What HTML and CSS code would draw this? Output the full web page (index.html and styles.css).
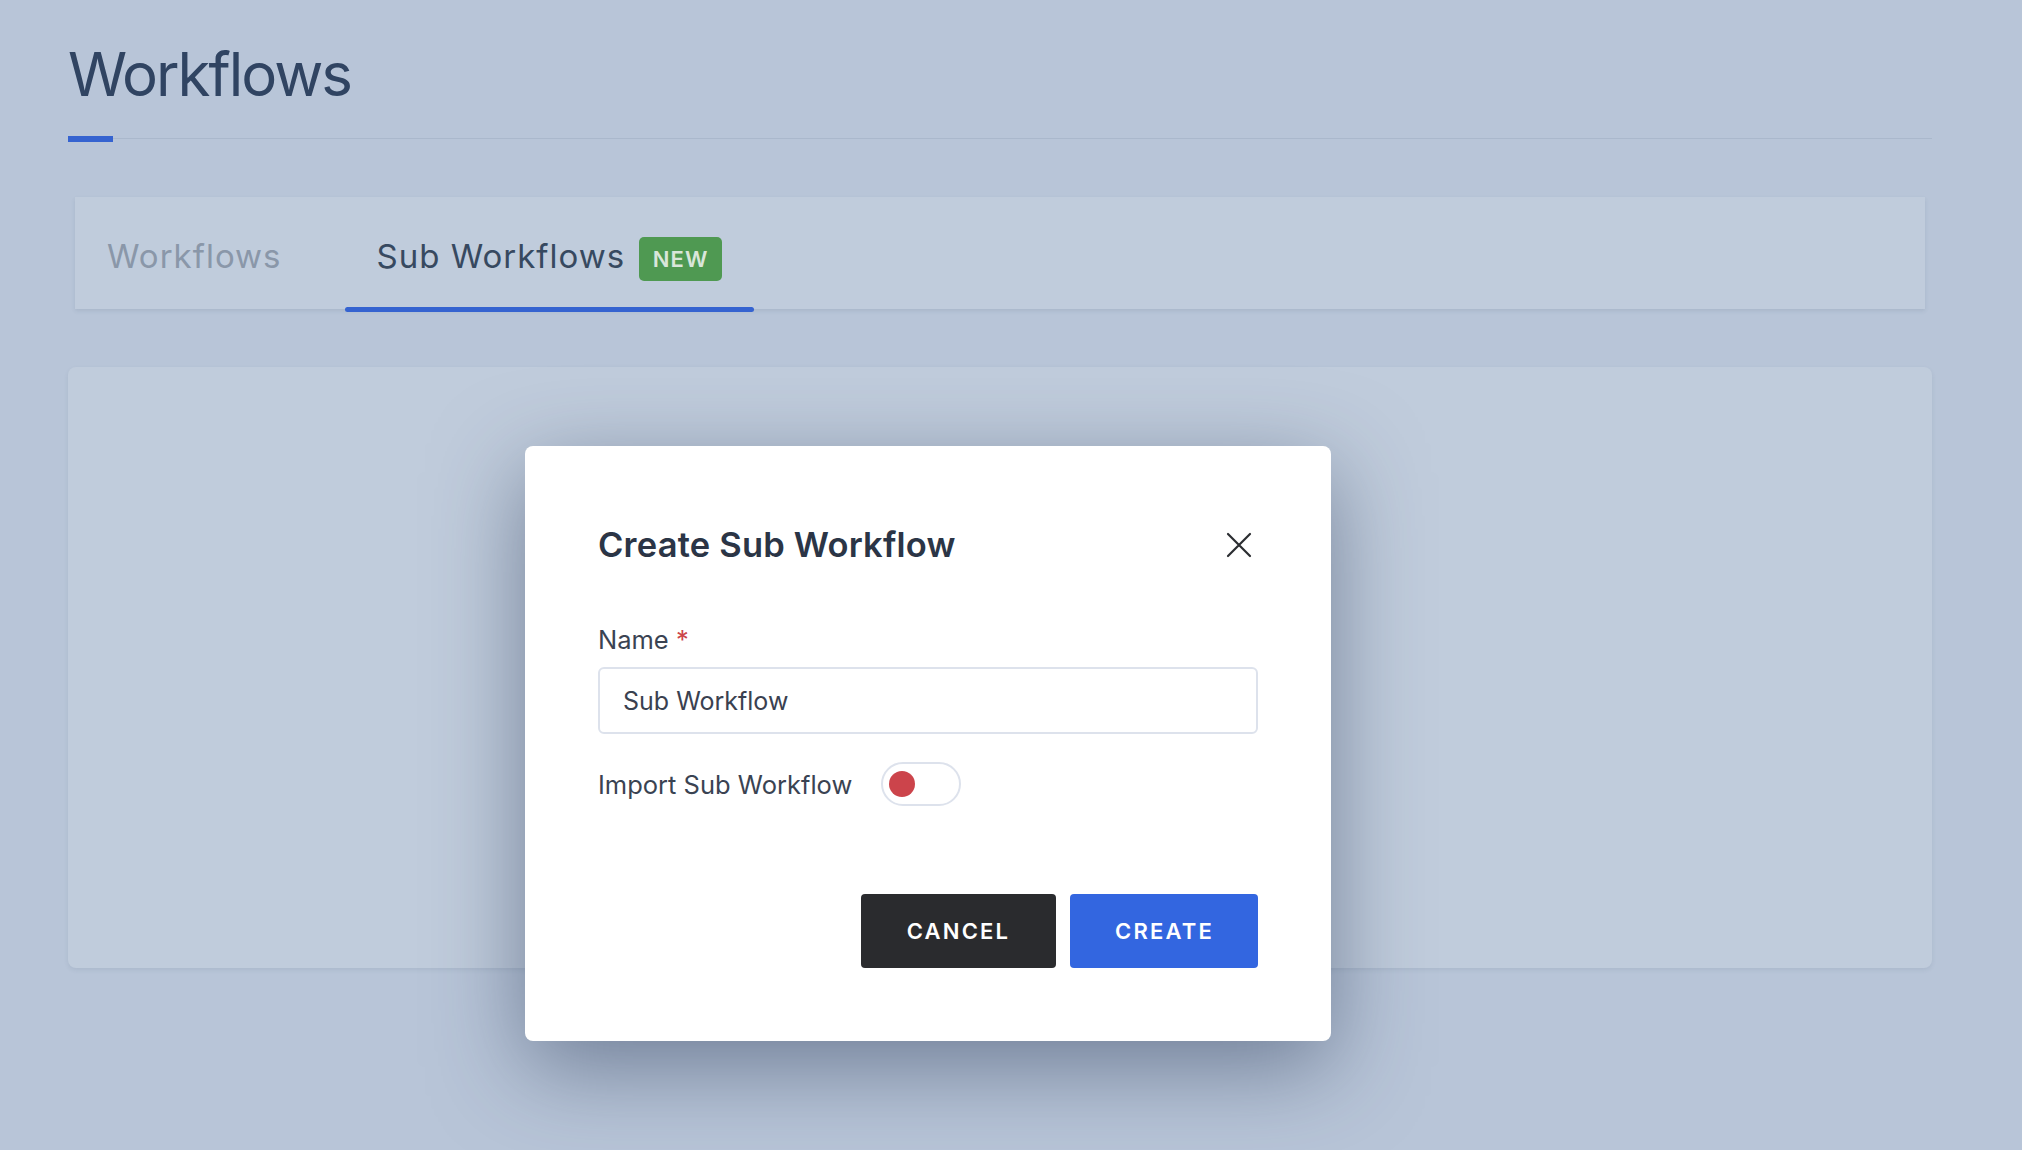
FILE: index.html
```html
<!DOCTYPE html>
<html lang="en">
<head>
<meta charset="utf-8">
<title>Workflows</title>
<link rel="stylesheet" href="styles.css">
</head>
<body>
<div class="page">
  <h1 class="page-title">Workflows</h1>
  <div class="title-rule"><span class="rule-accent"></span><span class="rule-line"></span></div>

  <div class="tabbar">
    <div class="tab">Workflows</div>
    <div class="tab tab-active">Sub Workflows <span class="badge">NEW</span></div>
  </div>

  <div class="card"></div>
</div>

<div class="modal">
  <div class="modal-head">
    <h2 class="modal-title">Create Sub Workflow</h2>
    <button class="close-btn" aria-label="Close">
      <svg width="26" height="26" viewBox="0 0 26 26"><path d="M2 2 L24 24 M24 2 L2 24" stroke="#2b2d31" stroke-width="2.2" fill="none" stroke-linecap="round"/></svg>
    </button>
  </div>
  <label class="field-label">Name <span class="req">*</span></label>
  <div class="input">Sub Workflow</div>
  <div class="toggle-row">
    <span class="toggle-label">Import Sub Workflow</span>
    <span class="toggle"><span class="knob"></span></span>
  </div>
  <div class="actions">
    <button class="btn btn-cancel">CANCEL</button>
    <button class="btn btn-create">CREATE</button>
  </div>
</div>
</body>
</html>
```

FILE: styles.css
```css
* { box-sizing: border-box; }
html, body { margin: 0; padding: 0; }
body {
  width: 2022px;
  height: 1150px;
  overflow: hidden;
  background: #b8c5d8;
  font-family: Inter, "Noto Sans", sans-serif;
  position: relative;
}
.page {
  padding: 38px 90px 0 68px;
}
.page-title {
  margin: 0;
  font-size: 60px;
  line-height: 72px;
  font-weight: 400;
  color: #304462;
  letter-spacing: -2px;
}
.title-rule {
  margin-top: 26px;
  display: flex;
  align-items: flex-start;
  height: 7px;
}
.rule-accent {
  width: 45px;
  height: 6px;
  background: #3563d0;
}
.rule-line {
  flex: 1;
  height: 1px;
  margin-top: 2px;
  background: #aab8cc;
}
.tabbar {
  margin: 54px 7px 0 7px;
  height: 112px;
  background: #c0ccdc;
  display: flex;
  align-items: stretch;
  box-shadow: 0 2px 4px rgba(60, 80, 110, 0.12);
}
.tab {
  display: flex;
  align-items: center;
  padding: 6px 32px 0 32px;
  font-size: 33px;
  letter-spacing: 1px;
  color: #8a97a9;
  position: relative;
  margin-right: 31px;
}
.tab-active {
  color: #374960;
}
.tab-active::after {
  content: "";
  position: absolute;
  left: 0;
  right: 0;
  bottom: -3px;
  height: 5px;
  border-radius: 3px;
  background: #3563d0;
}
.badge {
  display: inline-flex;
  align-items: center;
  justify-content: center;
  margin-left: 14px;
  width: 83px;
  height: 44px;
  border-radius: 5px;
  background: #4f9952;
  color: #d9e6da;
  font-size: 22px;
  font-weight: 600;
  letter-spacing: 1.2px;
  margin-top: 6px;
}
.card {
  margin-top: 58px;
  height: 601px;
  background: #c0ccdc;
  border-radius: 8px;
  box-shadow: 0 2px 4px rgba(60, 80, 110, 0.1);
}
.modal {
  position: absolute;
  left: 525px;
  top: 446px;
  width: 806px;
  height: 595px;
  background: #ffffff;
  border-radius: 8px;
  padding: 79px 73px 0 73px;
  box-shadow: 0 26px 90px rgba(40, 55, 85, 0.5);
}
.modal-head {
  display: flex;
  align-items: center;
  justify-content: space-between;
  height: 40px;
}
.modal-title {
  margin: 0;
  font-size: 34.5px;
  line-height: 40px;
  font-weight: 600;
  color: #2b3546;
  letter-spacing: 0.2px;
}
.close-btn {
  width: 38px;
  height: 38px;
  padding: 0;
  border: 0;
  background: none;
  display: flex;
  align-items: center;
  justify-content: center;
  margin-right: 0;
}
.field-label {
  display: block;
  margin-top: 60px;
  font-size: 25.5px;
  line-height: 30px;
  color: #3a4352;
}
.req { color: #cc4649; }
.input {
  margin-top: 12px;
  height: 67px;
  border: 2px solid #dde2ec;
  border-radius: 6px;
  padding: 0 23px;
  display: flex;
  align-items: center;
  font-size: 25px;
  color: #3a4150;
}
.toggle-row {
  margin-top: 28px;
  display: flex;
  align-items: center;
  height: 44px;
}
.toggle-label {
  font-size: 25.5px;
  color: #3a4352;
}
.toggle {
  margin-left: 29px;
  width: 80px;
  height: 44px;
  border: 2px solid #dde2ec;
  border-radius: 22px;
  display: flex;
  align-items: center;
  padding-left: 6px;
}
.knob {
  width: 26px;
  height: 26px;
  border-radius: 50%;
  background: #cc444b;
}
.actions {
  margin-top: 88px;
  display: flex;
  justify-content: flex-end;
  gap: 14px;
}
.btn {
  height: 74px;
  border: 0;
  border-radius: 4px;
  padding: 0 45px;
  font-family: Inter, "Noto Sans", sans-serif;
  font-size: 22px;
  font-weight: 600;
  letter-spacing: 2.2px;
  color: #ffffff;
}
.btn-cancel { background: #2a2b2e; width: 195px; }
.btn-create { background: #3366e0; width: 188px; }
```
